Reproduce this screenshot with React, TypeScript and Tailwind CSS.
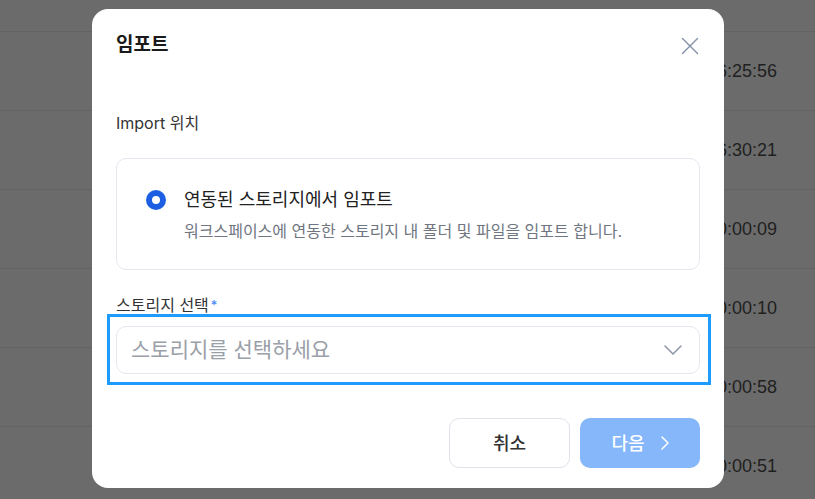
import React from 'react';

const times = ['16:25:56', '16:30:21', '00:00:09', '00:00:10', '00:00:58', '00:00:51'];

const ImportModal = () => {
  return (
    <div className="absolute left-[92px] top-[9px] w-[632px] h-[479px] bg-white rounded-2xl px-6 pt-[23px] pb-5 flex flex-col">
      {/* Header */}
      <div className="flex items-center justify-between h-[26px]">
        <h2 className="text-[19px] leading-[26px] font-bold text-[#1a1a1a]">임포트</h2>
        <svg width="18" height="18" viewBox="0 0 18 18" className="mr-[1px] mt-[1px]">
          <path d="M1.5 1.5 L16.5 16.5 M16.5 1.5 L1.5 16.5" stroke="#8190a6" strokeWidth="1.4" strokeLinecap="round" fill="none" />
        </svg>
      </div>

      <p className="mt-[55px] text-[16px] leading-5 text-[#333]">Import 위치</p>

      {/* Location card */}
      <div className="mt-[25px] h-[112px] border border-[#e3e7ee] rounded-[10px] pl-[29px] flex flex-col justify-center">
        <div className="flex items-center h-6">
          <div className="w-5 h-5 rounded-full border-[6px] border-[#1d5fe3] bg-white flex-shrink-0" />
          <span className="ml-[18px] text-[18px] leading-6 text-[#222]">연동된 스토리지에서 임포트</span>
        </div>
        <p className="mt-[9px] ml-[38px] text-[16px] leading-5 text-[#70767f]">
          워크스페이스에 연동한 스토리지 내 폴더 및 파일을 임포트 합니다.
        </p>
      </div>

      <p className="mt-[25px] text-[16px] leading-5 text-[#333]">
        스토리지 선택<span className="ml-[2px] text-[#3b82f6] text-[13px] align-top">*</span>
      </p>

      {/* Select */}
      <div className="mt-[11px] h-12 border border-[#e3e7ee] rounded-[10px] pl-[14px] pr-[17px] flex items-center justify-between">
        <span className="text-[21px] text-[#9aa0a8]">스토리지를 선택하세요</span>
        <svg width="18" height="10" viewBox="0 0 18 10">
          <path d="M1 1 L9 9 L17 1" stroke="#8a94a6" strokeWidth="1.5" strokeLinecap="round" strokeLinejoin="round" fill="none" />
        </svg>
      </div>

      {/* Footer */}
      <div className="mt-[44px] flex justify-end gap-[10px]">
        <button className="w-[121px] h-[50px] rounded-[10px] border border-[#dfe3ea] bg-white text-[18px] font-medium text-[#333]">
          취소
        </button>
        <button className="w-[120px] h-[50px] rounded-[10px] bg-[#85b7fa] text-[18px] font-medium text-white flex items-center justify-center gap-4">
          다음
          <svg width="8" height="14" viewBox="0 0 8 14">
            <path d="M1 1 L7 7 L1 13" stroke="white" strokeWidth="1.5" strokeLinecap="round" strokeLinejoin="round" fill="none" />
          </svg>
        </button>
      </div>
    </div>
  );
};

export default function App() {
  return (
    <div className="relative w-[815px] h-[499px] overflow-hidden bg-[#6b6b6b] font-['Inter','Noto_Sans_CJK_KR',sans-serif]">
      {/* Dimmed page behind */}
      <div className="flex flex-col">
        <div className="h-[32px] border-b border-[#636363]" />
        {times.map((t) => (
          <div key={t} className="h-[79px] border-b border-[#636363] flex items-center justify-end pr-[38px]">
            <span className="font-['Liberation_Sans',sans-serif] text-[18px] text-[#1f1f1f]">{t}</span>
          </div>
        ))}
      </div>

      <ImportModal />

      {/* Highlight frame */}
      <div className="absolute left-[107px] top-[314px] w-[604px] h-[71px] border-[3px] border-[#1e9bff]" />
    </div>
  );
}
